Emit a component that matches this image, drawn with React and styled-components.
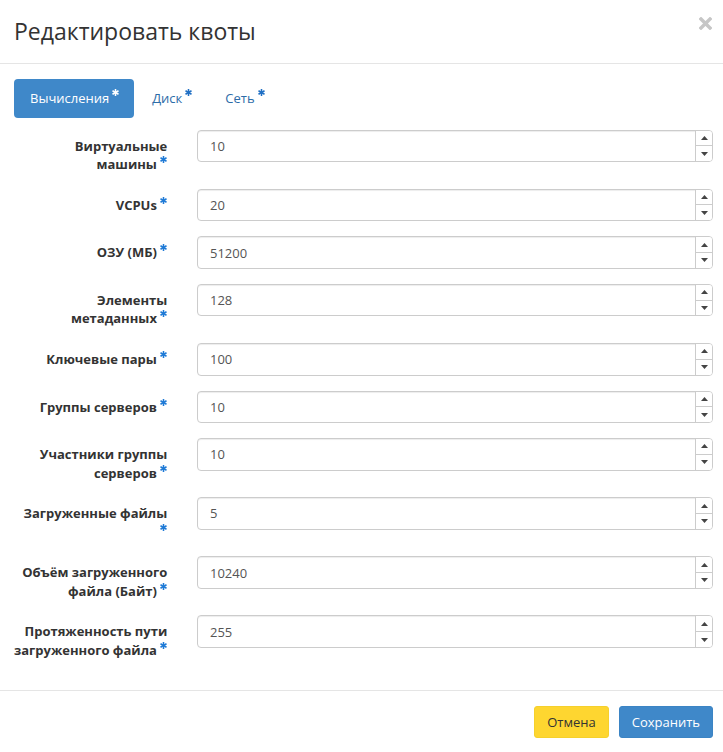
import React, { useState } from "react";
import styled, { createGlobalStyle } from "styled-components";

const GlobalStyle = createGlobalStyle`
  body {
    margin: 0;
    background: #fff;
    font-family: "Open Sans", "Liberation Sans", sans-serif;
    font-size: 13px;
    color: #333;
  }
  * { box-sizing: border-box; }
`;

const Modal = styled.div`
  width: 723px;
  background: #fff;
`;

const Header = styled.div`
  display: flex;
  align-items: flex-start;
  justify-content: space-between;
  padding: 15px 11px 15px 14px;
  border-bottom: 1px solid #e5e5e5;
`;

const Title = styled.h4`
  margin: 0;
  font-size: 23px;
  line-height: 33px;
  font-weight: 400;
  color: #333;
`;

const CloseButton = styled.button`
  border: 0;
  background: none;
  padding: 0;
  margin-top: 2px;
  cursor: pointer;
  display: flex;
`;

const Body = styled.div`
  padding: 15px 10px 15px 14px;
`;

const Tabs = styled.ul`
  display: flex;
  list-style: none;
  margin: 0;
  padding: 0;
`;

const Tab = styled.li`
  margin-right: 2px;
  padding: 10px 15px 10px 16px;
  line-height: 18.57px;
  font-size: 13px;
  border-radius: 4px;
  cursor: pointer;
  color: ${(p) => (p.$active ? "#fff" : "#2d6ca8")};
  background: ${(p) => (p.$active ? "#3f88c9" : "transparent")};
`;

const Star = styled.svg`
  display: inline-block;
  vertical-align: top;
  margin-left: ${(p) => p.$gap || 0}px;
  margin-top: ${(p) => p.$top || 0}px;
`;

const Form = styled.div`
  margin-top: 12px;
`;

const Row = styled.div`
  display: grid;
  grid-template-columns: 153.3px 1fr;
  column-gap: 29.7px;
  margin-bottom: 15px;
`;

const Label = styled.label`
  padding-top: 7px;
  text-align: right;
  font-weight: 700;
  font-size: 13px;
  line-height: 18.57px;
  color: #333;
`;

const Field = styled.div`
  display: flex;
  align-self: start;
  border: 1px solid #ccc;
  border-radius: 4px;
  box-shadow: inset 0 1px 1px rgba(0, 0, 0, 0.075);
  overflow: hidden;
`;

const Input = styled.input`
  flex: 1;
  min-width: 0;
  border: 0;
  outline: none;
  padding: 6px 12px;
  font-family: "Open Sans", "Liberation Sans", sans-serif;
  font-size: 13px;
  line-height: 18.57px;
  height: 30.57px;
  color: #555;
  background: transparent;
`;

const Spinner = styled.div`
  width: 17px;
  display: flex;
  flex-direction: column;
  border-left: 1px solid #ccc;
`;

const SpinButton = styled.div`
  flex: 1;
  display: flex;
  align-items: center;
  justify-content: center;
  background: #fff;
  & + & { border-top: 1px solid #ccc; }
`;

const Footer = styled.div`
  display: flex;
  justify-content: flex-end;
  gap: 10px;
  padding: 15px 10px 15px 14px;
  border-top: 1px solid #e5e5e5;
`;

const Button = styled.button`
  font-family: "Open Sans", "Liberation Sans", sans-serif;
  font-size: 13px;
  line-height: 18.57px;
  padding: 6px 12px;
  border-radius: 3px;
  cursor: pointer;
  border: 1px solid ${(p) => (p.$primary ? "#3b84c4" : "#f5d02c")};
  background: ${(p) => (p.$primary ? "#3f88c9" : "#fed630")};
  color: ${(p) => (p.$primary ? "#fff" : "#333")};
`;

function Asterisk({ color = "#1f7ad6", size = 7, gap, top }) {
  return (
    <Star width={size} height={size} viewBox="0 0 10 10" $gap={gap} $top={top}>
      <g stroke={color} strokeWidth="2.2" strokeLinecap="butt">
        <line x1="5" y1="0" x2="5" y2="10" />
        <line x1="0.7" y1="2.5" x2="9.3" y2="7.5" />
        <line x1="0.7" y1="7.5" x2="9.3" y2="2.5" />
      </g>
    </Star>
  );
}

const fields = [
  ["Виртуальные машины", "10"],
  ["VCPUs", "20"],
  ["ОЗУ (МБ)", "51200"],
  ["Элементы метаданных", "128"],
  ["Ключевые пары", "100"],
  ["Группы серверов", "10"],
  ["Участники группы серверов", "10"],
  ["Загруженные файлы", "5"],
  ["Объём загруженного файла (Байт)", "10240"],
  ["Протяженность пути загруженного файла", "255"],
];

const tabs = ["Вычисления", "Диск", "Сеть"];

export default function App() {
  const [active, setActive] = useState(0);
  const [values, setValues] = useState(fields.map((f) => f[1]));

  const step = (i, d) =>
    setValues((v) => v.map((x, j) => (j === i ? String(Number(x) + d) : x)));

  return (
    <Modal>
      <GlobalStyle />
      <Header>
        <Title>Редактировать квоты</Title>
        <CloseButton aria-label="close">
          <svg width="13" height="13" viewBox="0 0 13 13">
            <path
              d="M2 2 L11 11 M11 2 L2 11"
              stroke="#c6c6c6"
              strokeWidth="3.4"
              strokeLinecap="square"
            />
          </svg>
        </CloseButton>
      </Header>
      <Body>
        <Tabs>
          {tabs.map((t, i) => (
            <Tab key={t} $active={i === active} onClick={() => setActive(i)}>
              {t}
              <Asterisk color={i === active ? "#fff" : "#1f6fc4"} gap={3} top={0} />
            </Tab>
          ))}
        </Tabs>
        <Form>
          {fields.map(([label], i) => (
            <Row key={label}>
              <Label>
                {label} <Asterisk top={1} />
              </Label>
              <Field>
                <Input
                  value={values[i]}
                  onChange={(e) =>
                    setValues((v) => v.map((x, j) => (j === i ? e.target.value : x)))
                  }
                />
                <Spinner>
                  <SpinButton onClick={() => step(i, 1)}>
                    <svg width="7" height="4" viewBox="0 0 7 4">
                      <path d="M0 4 L3.5 0 L7 4 Z" fill="#444" />
                    </svg>
                  </SpinButton>
                  <SpinButton onClick={() => step(i, -1)}>
                    <svg width="7" height="4" viewBox="0 0 7 4">
                      <path d="M0 0 L3.5 4 L7 0 Z" fill="#444" />
                    </svg>
                  </SpinButton>
                </Spinner>
              </Field>
            </Row>
          ))}
        </Form>
      </Body>
      <Footer>
        <Button>Отмена</Button>
        <Button $primary>Сохранить</Button>
      </Footer>
    </Modal>
  );
}
